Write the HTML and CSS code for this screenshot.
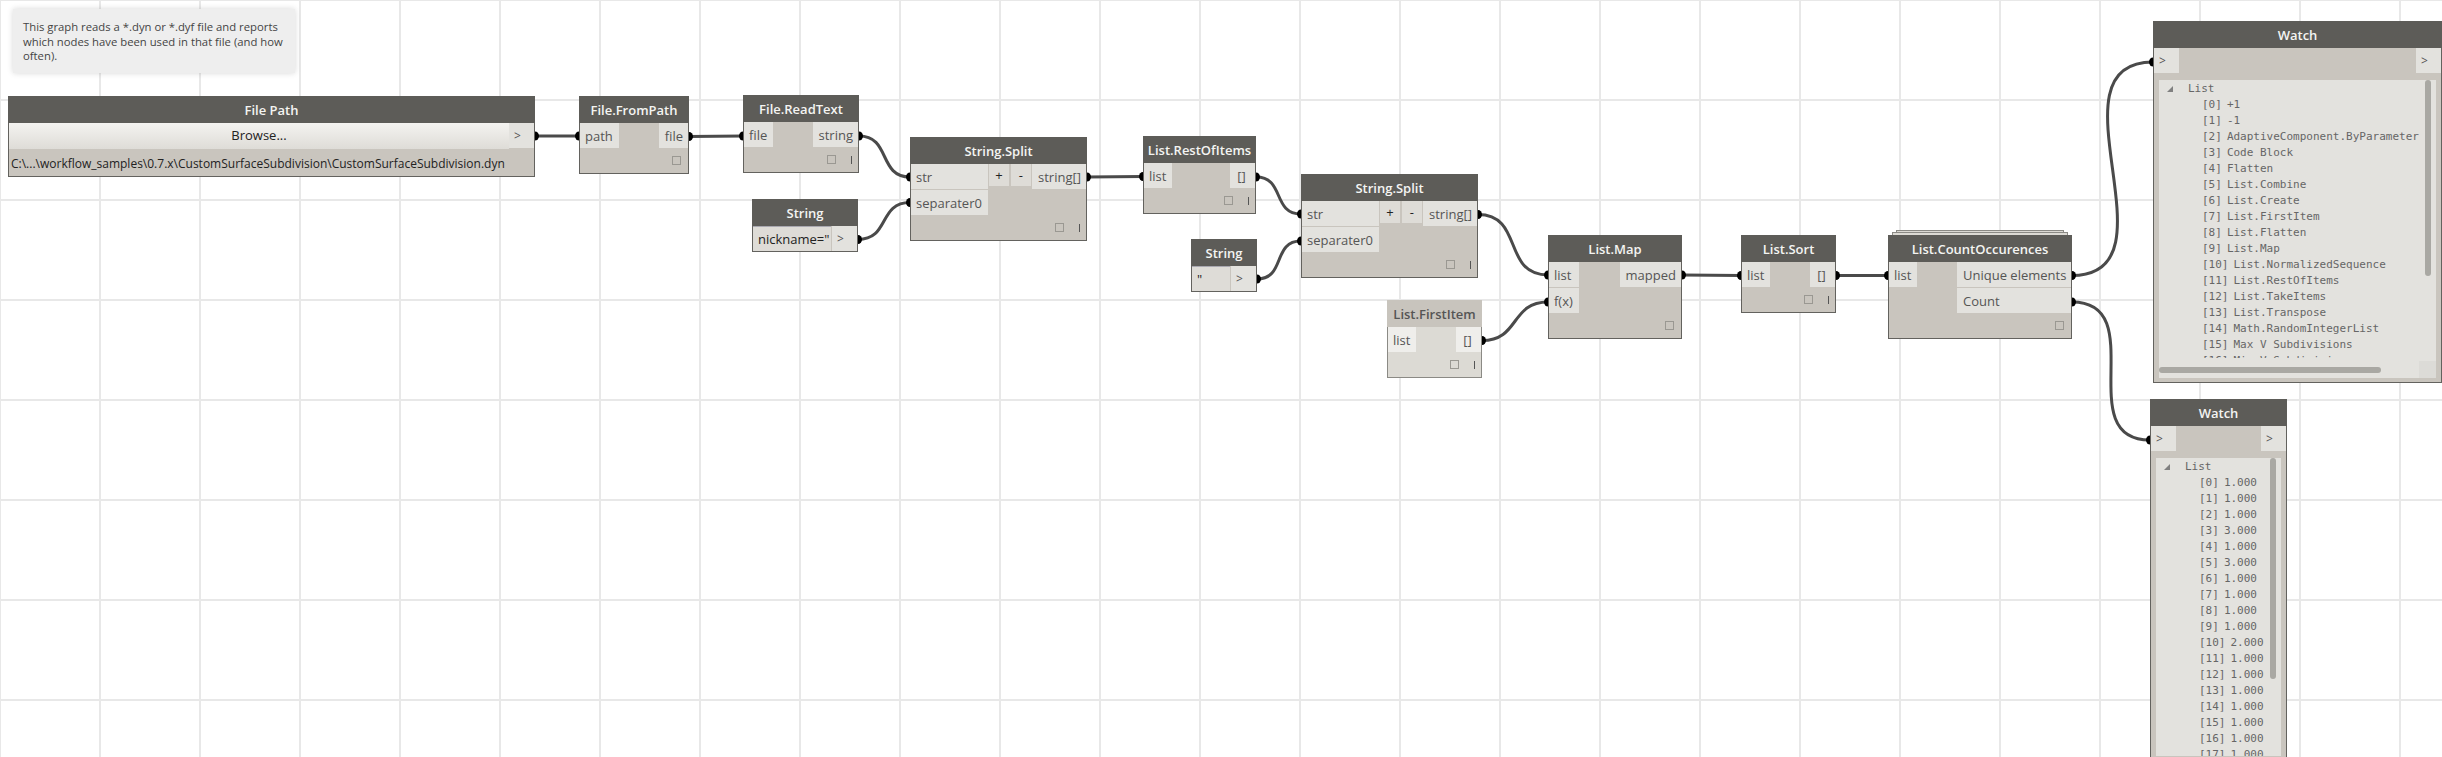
FILE: index.html
```html
<!DOCTYPE html>
<html lang="en">
  <head>
    <meta charset="UTF-8" />
    <title>Dynamo graph</title>
    <link rel="stylesheet" href="styles.css">
  </head>
  <body>
    <div class="canvas">
      <svg class="wires" width="2442" height="757">
        <g class="wire">
          <path d="M535 136 L579 136" />
          <path d="M689 136.5 L743 136" />
          <path d="M859 136 C891 136 878 177 910 177" />
          <path d="M858 239.5 C890 239.5 878 202.5 910 202.5" />
          <path d="M1087 177 L1143 176.5" />
          <path d="M1256 177 C1285 177 1272 214 1301 214" />
          <path d="M1257 279 C1286 279 1272 241 1301 241" />
          <path d="M1478 214.5 C1524 214.5 1502 275 1548 275" />
          <path d="M1482 340.5 C1520 340.5 1510 302 1548 302" />
          <path d="M1682 275 L1741 275.5" />
          <path d="M1836 275.5 L1888 275.5" />
          <path d="M2072 275.5 C2182 275.5 2043 62 2153 62" />
          <path d="M2072 302 C2152 302 2070 440 2150 440" />
        </g>
        <g class="blob">
          <ellipse cx="535" cy="136" rx="4" ry="4.5" />
          <ellipse cx="579" cy="136" rx="4" ry="4.5" />
          <ellipse cx="689" cy="136.5" rx="4" ry="4.5" />
          <ellipse cx="743" cy="136" rx="4" ry="4.5" />
          <ellipse cx="859" cy="136" rx="4" ry="4.5" />
          <ellipse cx="910" cy="177" rx="4" ry="4.5" />
          <ellipse cx="858" cy="239.5" rx="4" ry="4.5" />
          <ellipse cx="910" cy="202.5" rx="4" ry="4.5" />
          <ellipse cx="1087" cy="177" rx="4" ry="4.5" />
          <ellipse cx="1143" cy="176.5" rx="4" ry="4.5" />
          <ellipse cx="1256" cy="177" rx="4" ry="4.5" />
          <ellipse cx="1301" cy="214" rx="4" ry="4.5" />
          <ellipse cx="1257" cy="279" rx="4" ry="4.5" />
          <ellipse cx="1301" cy="241" rx="4" ry="4.5" />
          <ellipse cx="1478" cy="214.5" rx="4" ry="4.5" />
          <ellipse cx="1548" cy="275" rx="4" ry="4.5" />
          <ellipse cx="1482" cy="340.5" rx="4" ry="4.5" />
          <ellipse cx="1548" cy="302" rx="4" ry="4.5" />
          <ellipse cx="1682" cy="275" rx="4" ry="4.5" />
          <ellipse cx="1741" cy="275.5" rx="4" ry="4.5" />
          <ellipse cx="1836" cy="275.5" rx="4" ry="4.5" />
          <ellipse cx="1888" cy="275.5" rx="4" ry="4.5" />
          <ellipse cx="2072" cy="275.5" rx="4" ry="4.5" />
          <ellipse cx="2153" cy="62" rx="4" ry="4.5" />
          <ellipse cx="2072" cy="302" rx="4" ry="4.5" />
          <ellipse cx="2150" cy="440" rx="4" ry="4.5" />
        </g>
      </svg>

      <div class="note">This graph reads a *.dyn or *.dyf file and reports which nodes have been used in that file (and how often).</div>

      <div class="node file-path">
        <div class="title">File Path</div>
        <div class="browse-row">
          <div class="browse">Browse...</div>
          <div class="port arrow">&gt;</div>
        </div>
        <div class="path-row">C:\...\workflow_samples\0.7.x\CustomSurfaceSubdivision\CustomSurfaceSubdivision.dyn</div>
      </div>

      <div class="node from-path">
        <div class="title">File.FromPath</div>
        <div class="ports">
          <div class="inputs"><div class="port">path</div></div>
          <div class="outputs"><div class="port">file</div></div>
        </div>
        <div class="footer"><span class="check"></span></div>
      </div>

      <div class="node read-text">
        <div class="title">File.ReadText</div>
        <div class="ports">
          <div class="inputs"><div class="port">file</div></div>
          <div class="outputs"><div class="port">string</div></div>
        </div>
        <div class="footer"><span class="check"></span><span class="lacing"></span></div>
      </div>

      <div class="node string-a">
        <div class="title">String</div>
        <div class="string-row">
          <div class="string-input">nickname="</div>
          <div class="port arrow">&gt;</div>
        </div>
      </div>

      <div class="node split-a">
        <div class="title">String.Split</div>
        <div class="ports">
          <div class="inputs"><div class="port">str</div><div class="port">separater0</div></div>
          <div class="add-remove"><span class="pm">+</span><span class="pm">-</span></div>
          <div class="outputs"><div class="port">string[]</div></div>
        </div>
        <div class="footer"><span class="check"></span><span class="lacing"></span></div>
      </div>

      <div class="node rest-of">
        <div class="title">List.RestOfItems</div>
        <div class="ports">
          <div class="inputs"><div class="port">list</div></div>
          <div class="outputs"><div class="port square">[]</div></div>
        </div>
        <div class="footer"><span class="check"></span><span class="lacing"></span></div>
      </div>

      <div class="node string-b">
        <div class="title">String</div>
        <div class="string-row">
          <div class="string-input">"</div>
          <div class="port arrow">&gt;</div>
        </div>
      </div>

      <div class="node split-b">
        <div class="title">String.Split</div>
        <div class="ports">
          <div class="inputs"><div class="port">str</div><div class="port">separater0</div></div>
          <div class="add-remove"><span class="pm">+</span><span class="pm">-</span></div>
          <div class="outputs"><div class="port">string[]</div></div>
        </div>
        <div class="footer"><span class="check"></span><span class="lacing"></span></div>
      </div>

      <div class="node first-item dim">
        <div class="title">List.FirstItem</div>
        <div class="ports">
          <div class="inputs"><div class="port">list</div></div>
          <div class="outputs"><div class="port square">[]</div></div>
        </div>
        <div class="footer"><span class="check"></span><span class="lacing"></span></div>
      </div>

      <div class="node list-map">
        <div class="title">List.Map</div>
        <div class="ports">
          <div class="inputs"><div class="port">list</div><div class="port">f(x)</div></div>
          <div class="outputs"><div class="port">mapped</div></div>
        </div>
        <div class="footer"><span class="check"></span></div>
      </div>

      <div class="node list-sort">
        <div class="title">List.Sort</div>
        <div class="ports">
          <div class="inputs"><div class="port">list</div></div>
          <div class="outputs"><div class="port square">[]</div></div>
        </div>
        <div class="footer"><span class="check"></span><span class="lacing"></span></div>
      </div>

      <div class="sheet sheet-back"></div>
      <div class="sheet sheet-mid"></div>
      <div class="node count">
        <div class="title">List.CountOccurences</div>
        <div class="ports">
          <div class="inputs"><div class="port">list</div></div>
          <div class="outputs wide"><div class="port">Unique elements</div><div class="port">Count</div></div>
        </div>
        <div class="footer"><span class="check"></span></div>
      </div>

      <div class="node watch watch-a">
        <div class="title">Watch</div>
        <div class="ports">
          <div class="port arrow">&gt;</div>
          <div class="port arrow">&gt;</div>
        </div>
        <div class="watch-panel">
          <div class="watch-list">
            <div class="watch-head"><svg class="tree-arrow" width="6" height="6"><polygon points="6,0 6,6 0,6" /></svg>List</div>
            <div class="item"><span>[0]</span>+1</div>
            <div class="item"><span>[1]</span>-1</div>
            <div class="item"><span>[2]</span>AdaptiveComponent.ByParameter</div>
            <div class="item"><span>[3]</span>Code Block</div>
            <div class="item"><span>[4]</span>Flatten</div>
            <div class="item"><span>[5]</span>List.Combine</div>
            <div class="item"><span>[6]</span>List.Create</div>
            <div class="item"><span>[7]</span>List.FirstItem</div>
            <div class="item"><span>[8]</span>List.Flatten</div>
            <div class="item"><span>[9]</span>List.Map</div>
            <div class="item"><span>[10]</span>List.NormalizedSequence</div>
            <div class="item"><span>[11]</span>List.RestOfItems</div>
            <div class="item"><span>[12]</span>List.TakeItems</div>
            <div class="item"><span>[13]</span>List.Transpose</div>
            <div class="item"><span>[14]</span>Math.RandomIntegerList</div>
            <div class="item"><span>[15]</span>Max V Subdivisions</div>
            <div class="item"><span>[16]</span>Min V Subdivisions</div>
          </div>
          <div class="scroll-v"></div>
          <div class="scroll-h"></div>
          <div class="scroll-corner"></div>
        </div>
      </div>

      <div class="node watch watch-b">
        <div class="title">Watch</div>
        <div class="ports">
          <div class="port arrow">&gt;</div>
          <div class="port arrow">&gt;</div>
        </div>
        <div class="watch-panel">
          <div class="watch-list">
            <div class="watch-head"><svg class="tree-arrow" width="6" height="6"><polygon points="6,0 6,6 0,6" /></svg>List</div>
            <div class="item"><span>[0]</span>1.000</div>
            <div class="item"><span>[1]</span>1.000</div>
            <div class="item"><span>[2]</span>1.000</div>
            <div class="item"><span>[3]</span>3.000</div>
            <div class="item"><span>[4]</span>1.000</div>
            <div class="item"><span>[5]</span>3.000</div>
            <div class="item"><span>[6]</span>1.000</div>
            <div class="item"><span>[7]</span>1.000</div>
            <div class="item"><span>[8]</span>1.000</div>
            <div class="item"><span>[9]</span>1.000</div>
            <div class="item"><span>[10]</span>2.000</div>
            <div class="item"><span>[11]</span>1.000</div>
            <div class="item"><span>[12]</span>1.000</div>
            <div class="item"><span>[13]</span>1.000</div>
            <div class="item"><span>[14]</span>1.000</div>
            <div class="item"><span>[15]</span>1.000</div>
            <div class="item"><span>[16]</span>1.000</div>
            <div class="item"><span>[17]</span>1.000</div>
          </div>
          <div class="scroll-v"></div>
        </div>
      </div>
    </div>
  </body>
</html>
```

FILE: styles.css
```css
html,
body {
  margin: 0;
  padding: 0;
  overflow: hidden;
}

.canvas {
  position: relative;
  width: 2442px;
  height: 757px;
  overflow: hidden;
  background-color: #ffffff;
  background-image: linear-gradient(to bottom, #e8e8e8 2px, transparent 2px), linear-gradient(to right, #e8e8e8 2px, transparent 2px);
  background-size: 100px 100px;
  background-position: -1px -1px;
  font-family: "Open Sans", sans-serif;
  font-size: 13px;
  color: #555;
}

.note {
  position: absolute;
  left: 13px;
  top: 9px;
  width: 282px;
  height: 64px;
  box-sizing: border-box;
  padding: 11px 9px 11px 10px;
  background-color: #eeeeee;
  box-shadow: 0 0 6px rgba(0, 0, 0, 0.16);
  font-size: 11.3px;
  line-height: 14.6px;
  color: #444;
}

/* nodes */
.node {
  position: absolute;
  box-sizing: border-box;
  border: 1px solid #63625e;
  background-color: #c9c5be;
}

.title {
  height: 26px;
  line-height: 26px;
  margin: -1px -1px 0;
  padding-top: 1px;
  background-color: #5d5c58;
  color: #f4f4f2;
  font-weight: 600;
  text-align: center;
  white-space: nowrap;
}

.ports {
  display: flex;
  justify-content: space-between;
}

.inputs,
.outputs {
  display: flex;
  flex-direction: column;
  gap: 1px;
}

.outputs {
  margin-left: auto;
}

.outputs.wide {
  width: 114px;
}

.port {
  height: 25px;
  line-height: 26px;
  padding: 0 6px 0 5px;
  background-color: #e3e2de;
  white-space: nowrap;
}

.outputs .port {
  padding: 0 5px 0 6px;
}

.outputs .port.square {
  width: 25px;
  box-sizing: border-box;
  padding: 0 2px 0 0;
  text-align: center;
}

.add-remove {
  display: flex;
  gap: 2px;
  margin-left: 1px;
}

.pm {
  width: 20px;
  height: 22px;
  line-height: 22px;
  text-align: center;
  background-color: #dedcd7;
  color: #222;
}

.footer {
  display: flex;
  justify-content: flex-end;
  align-items: center;
  height: 25px;
  padding-right: 7px;
}

.check {
  width: 9px;
  height: 9px;
  border: 1px solid #9a9892;
  box-sizing: border-box;
}

.lacing {
  width: 1px;
  height: 8px;
  margin-left: 15px;
  margin-right: -1px;
  background-color: #555;
}

.dim {
  border-color: #8b8a85;
  background-color: #dcdad4;
}

.dim .title {
  background-color: #c8c4bd;
  color: #555;
}

.dim .port {
  background-color: #efeeeb;
}

/* input rows */
.browse-row {
  display: flex;
  height: 26px;
}

.browse {
  flex: 1;
  line-height: 24px;
  text-align: center;
  color: #222;
  background: linear-gradient(#f4f3f0, #dedcd7);
}

.arrow {
  width: 25px;
  box-sizing: border-box;
  padding: 0 5px;
  font-size: 12px;
}

.path-row {
  height: 27px;
  line-height: 29px;
  padding-left: 2px;
  font-size: 12px;
  color: #222;
  white-space: nowrap;
}

.string-row {
  display: flex;
}

.string-input {
  flex: 1;
  height: 25px;
  box-sizing: border-box;
  border-top: 1px solid #a9a8b0;
  padding-left: 5px;
  line-height: 24px;
  background-color: #dedcd7;
  color: #222;
}

.string-row .arrow {
  margin-left: 1px;
}

/* node places on the canvas */
.file-path { left: 8px; top: 96px; width: 527px; height: 81px; }
.from-path { left: 579px; top: 96px; width: 110px; height: 78px; }
.read-text { left: 743px; top: 95px; width: 116px; height: 78px; }
.string-a { left: 752px; top: 199px; width: 106px; height: 53px; }
.split-a { left: 910px; top: 137px; width: 177px; height: 104px; }
.rest-of { left: 1143px; top: 136px; width: 113px; height: 78px; }
.string-b { left: 1191px; top: 239px; width: 66px; height: 53px; }
.split-b { left: 1301px; top: 174px; width: 177px; height: 104px; }
.first-item { left: 1387px; top: 300px; width: 95px; height: 78px; }
.list-map { left: 1548px; top: 235px; width: 134px; height: 104px; }
.list-sort { left: 1741px; top: 235px; width: 95px; height: 78px; }
.count { left: 1888px; top: 235px; width: 184px; height: 104px; }
.watch-a { left: 2153px; top: 21px; width: 289px; height: 362px; }
.watch-b { left: 2150px; top: 399px; width: 137px; height: 372px; }

.sheet {
  position: absolute;
  box-sizing: border-box;
  border: 1px solid #8b8a85;
  background-color: #dcdad4;
}

.sheet-back { left: 1896px; top: 230px; width: 168px; height: 10px; }
.sheet-mid { left: 1892px; top: 232px; width: 176px; height: 10px; }

/* watch */
.watch .port {
  width: 25px;
  box-sizing: border-box;
}

.watch-panel {
  position: relative;
  height: 298px;
  margin: 7px 5px 0;
  background-color: #e3e2de;
  font-family: "DejaVu Sans Mono", monospace;
  font-size: 11px;
  line-height: 16px;
  color: #666;
}

.watch-list {
  height: 278px;
  overflow: hidden;
  padding-top: 1px;
  box-sizing: border-box;
  white-space: nowrap;
}

.watch-b .watch-list {
  height: 298px;
}

.watch-head {
  display: flex;
  align-items: center;
  padding-left: 8px;
}

.tree-arrow {
  margin-right: 15px;
  fill: #808080;
}

.item {
  padding-left: 43px;
}

.item span {
  margin-right: 5px;
}

.scroll-v {
  position: absolute;
  top: 0;
  right: 5px;
  width: 6px;
  height: 196px;
  border-radius: 3px;
  background-color: #a9a8a3;
}

.watch-b .scroll-v {
  height: 221px;
}

.scroll-h {
  position: absolute;
  left: 0;
  bottom: 5px;
  width: 222px;
  height: 6px;
  border-radius: 3px;
  background-color: #a9a8a3;
}

.scroll-corner {
  position: absolute;
  right: 0;
  bottom: 0;
  width: 17px;
  height: 17px;
  background-color: #dcdbd7;
}

/* connectors */
.wires {
  position: absolute;
  left: 0;
  top: 0;
  pointer-events: none;
}

.wire path {
  fill: none;
  stroke: #4a4a4a;
  stroke-width: 3;
}

.blob ellipse {
  fill: #000;
}
```
